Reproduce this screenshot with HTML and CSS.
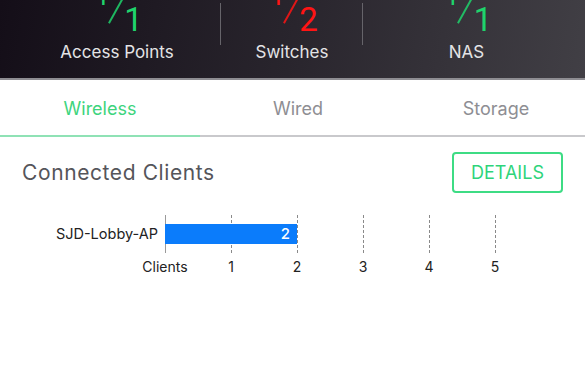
FILE: index.html
```html
<!DOCTYPE html>
<html lang="en">

<head>
    <meta charset="UTF-8">
    <meta name="viewport" content="width=device-width, initial-scale=1.0">
    <title>Devices</title>
    <link rel="stylesheet" href="styles.css">
</head>

<body>
    <div id="summary">
        <div class="stat stat-ap">
            <div class="frac ok"><span class="num">1</span><span class="slash"></span><span class="den">1</span></div>
            <div class="stat-label">Access Points</div>
        </div>
        <div class="stat stat-sw">
            <div class="frac bad"><span class="num">1</span><span class="slash"></span><span class="den">2</span></div>
            <div class="stat-label">Switches</div>
        </div>
        <div class="stat stat-nas">
            <div class="frac ok"><span class="num">1</span><span class="slash"></span><span class="den">1</span></div>
            <div class="stat-label">NAS</div>
        </div>
    </div>

    <div id="tabs">
        <div class="tab active">Wireless</div>
        <div class="tab">Wired</div>
        <div class="tab">Storage</div>
    </div>

    <div id="clients">
        <div class="section-head">
            <div class="section-title">Connected Clients</div>
            <button class="details-btn">DETAILS</button>
        </div>

        <div class="chart">
            <div class="chart-row">
                <div class="row-label">SJD-Lobby-AP</div>
                <div class="plot">
                    <div class="grid-line axis" style="left: 0%"></div>
                    <div class="grid-line" style="left: 20%"></div>
                    <div class="grid-line" style="left: 40%"></div>
                    <div class="grid-line" style="left: 60%"></div>
                    <div class="grid-line" style="left: 80%"></div>
                    <div class="grid-line" style="left: 100%"></div>
                    <div class="bar" style="width: 40%">2</div>
                </div>
            </div>
            <div class="chart-row">
                <div class="row-label"></div>
                <div class="ticks">
                    <span class="tick" style="left: 0%">Clients</span>
                    <span class="tick" style="left: 20%">1</span>
                    <span class="tick" style="left: 40%">2</span>
                    <span class="tick" style="left: 60%">3</span>
                    <span class="tick" style="left: 80%">4</span>
                    <span class="tick" style="left: 100%">5</span>
                </div>
            </div>
        </div>
    </div>
</body>

</html>
```

FILE: styles.css
```css
body {
    margin: 0;
    background-color: #fff;
    font-family: Inter, Roboto, "Liberation Sans", sans-serif;
    overflow: hidden;
}

#summary {
    display: flex;
    height: 78px;
    border-bottom: 2px solid #8e8d92;
    background: linear-gradient(100deg, #140e18 0%, #29252d 50%, #413f45 100%);
    overflow: hidden;
}

.stat {
    display: flex;
    flex-direction: column;
    align-items: center;
}

.stat-ap {
    width: 208px;
    padding-left: 13px;
}

.stat-sw {
    width: 142px;
}

.stat-nas {
    width: 207px;
}

.stat-ap,
.stat-sw {
    background: linear-gradient(#66646a, #66646a) right 3px / 1px 42px no-repeat;
}

.frac {
    display: flex;
    align-items: flex-start;
    height: 32px;
    margin-top: 4px;
    margin-left: 4px;
    font-family: Roboto, sans-serif;
}

.frac.ok {
    color: #1fd36c;
}

.frac.bad {
    color: #ff1414;
}

.num {
    font-size: 26px;
    line-height: 26px;
    margin-top: -21px;
}

.slash {
    width: 1.5px;
    height: 29px;
    margin: -8px 8px 0 5px;
    background-color: currentColor;
    transform: rotate(29deg);
    opacity: 0.85;
}

.den {
    font-size: 33px;
    line-height: 32px;
}

.stat-label {
    margin-top: 6px;
    font-size: 17px;
    line-height: 20px;
    color: #e4e4e6;
}

#tabs {
    display: flex;
    overflow: hidden;
}

.tab {
    flex: 0 0 200px;
    height: 53px;
    padding-top: 2px;
    line-height: 53px;
    text-align: center;
    font-size: 18px;
    color: #8e8e93;
    border-bottom: 2px solid #c9c9cc;
}

.tab:nth-child(2) {
    flex-basis: 196px;
}

.tab.active {
    color: #3dd47d;
    border-bottom-color: #8fe2b5;
}

#clients {
    padding: 15px 22px 0;
}

.section-head {
    display: flex;
    justify-content: space-between;
    align-items: center;
}

.section-title {
    font-size: 21px;
    letter-spacing: 0.6px;
    color: #55555a;
}

.details-btn {
    width: 111px;
    height: 41px;
    padding: 0;
    background: none;
    border: 2px solid #3ddc84;
    border-radius: 4px;
    color: #2ed47a;
    font-family: inherit;
    font-size: 18px;
}

.chart {
    margin-top: 22px;
}

.chart-row {
    display: flex;
}

.row-label {
    width: 136px;
    padding-right: 7px;
    font-size: 14.5px;
    line-height: 38px;
    text-align: right;
    color: #222;
}

.plot,
.ticks {
    position: relative;
    width: 330px;
}

.plot {
    height: 38px;
}

.grid-line {
    position: absolute;
    top: 0;
    bottom: 0;
    width: 1px;
    background: repeating-linear-gradient(to bottom, #8a8a8a 0 3px, transparent 3px 5px);
}

.grid-line.axis {
    background: #9a9a9a;
}

.bar {
    position: relative;
    height: 20px;
    margin-top: 9px;
    padding-right: 7px;
    box-sizing: border-box;
    background-color: #0b7cfb;
    color: #fff;
    font-size: 15px;
    font-weight: 500;
    line-height: 20px;
    text-align: right;
}

.ticks {
    height: 24px;
}

.tick {
    position: absolute;
    top: 5px;
    transform: translateX(-50%);
    font-size: 14px;
    color: #222;
}
```
